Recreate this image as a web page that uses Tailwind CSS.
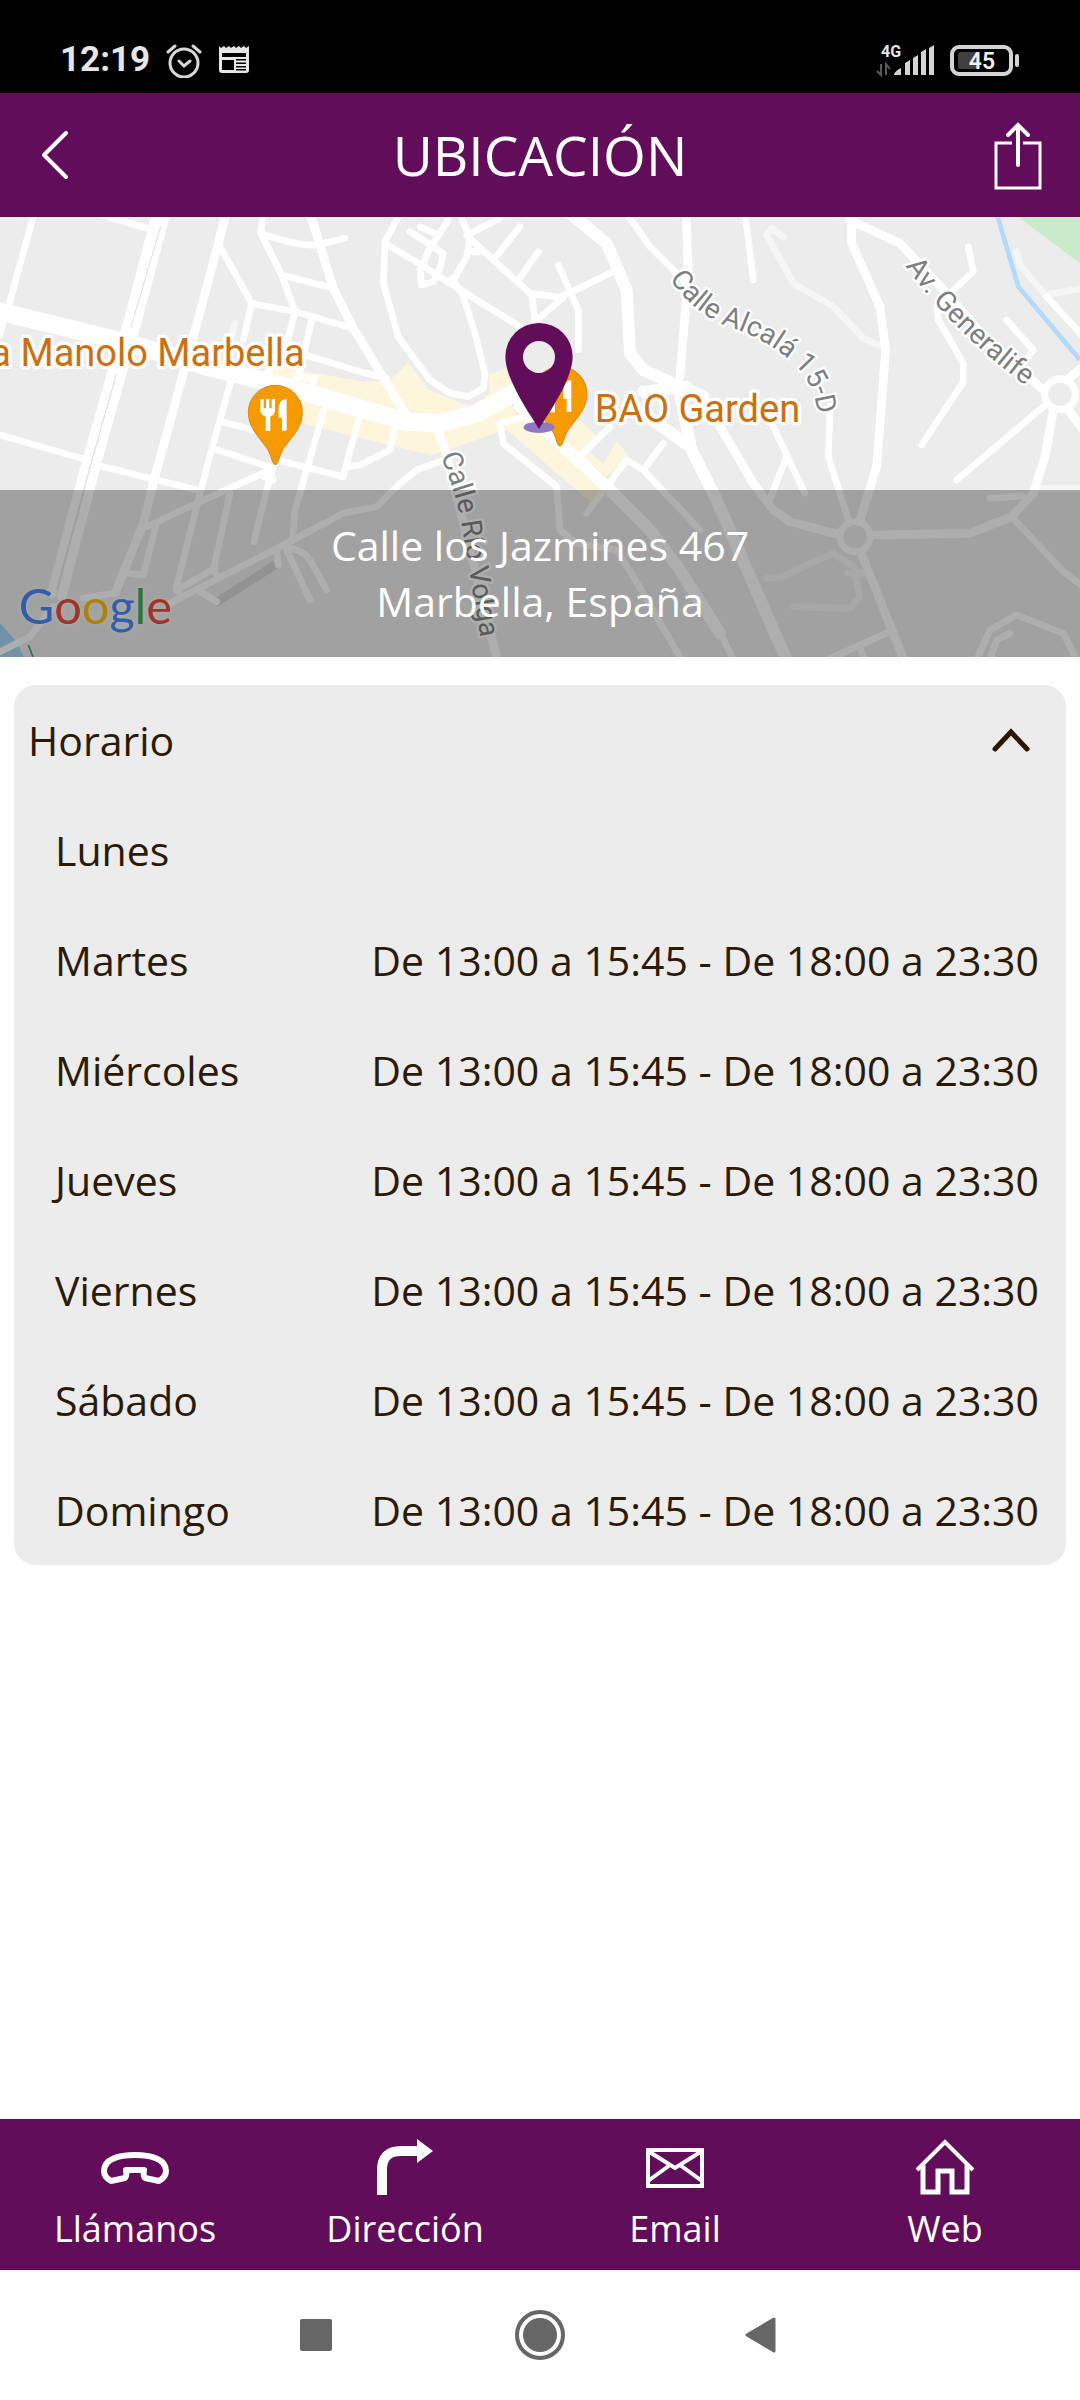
<!DOCTYPE html>
<html lang="es">
<head>
<meta charset="utf-8">
<meta name="viewport" content="width=device-width, initial-scale=1">
<title>Ubicación</title>
<script src="https://cdn.jsdelivr.net/npm/@tailwindcss/browser@4"></script>
</head>
<body class="flex min-h-screen flex-col bg-white font-['Open_Sans',sans-serif] text-[41px] leading-[56px] text-[#2b1a06]">

<!-- System status bar -->
<div class="flex h-[93px] items-center justify-between bg-black pt-[26px] pr-[60px] pl-[60px] font-['Roboto',sans-serif] text-[#e6e6e6]">
  <div class="flex items-center">
    <span class="text-[35px] leading-10 font-bold">12:19</span>
    <svg class="ml-4 h-9 w-9" viewBox="0 0 36 36" fill="none" stroke="#d8d8d8" stroke-width="3" stroke-linecap="round" aria-hidden="true"><circle cx="18" cy="21" r="14"/><path d="M2 10l7-6M34 10l-7-6M13 19l5 5 6-5"/></svg>
    <svg class="ml-4 h-8 w-8" viewBox="0 0 32 32" aria-hidden="true"><path fill="#e6e6e6" d="M1 2l2 2 3-2 2 2 3-2 2 2 3-2 2 2 3-2 2 2 3-2 2 2 3-2v24a3 3 0 0 1-3 3H4a3 3 0 0 1-3-3z"/><path fill="#000" d="M4 9h24v4H4zM4 16h12v10H4zM18 15h10v1.500H18zM18 18.500h10V20H18zM18 22h10v1.500H18zM18 25h10v1.500H18z"/></svg>
  </div>
  <div class="flex items-center gap-4">
    <svg class="h-8 w-[58px] overflow-visible" viewBox="0 0 58 32" aria-hidden="true"><text x="5" y="13" font-size="16" font-weight="700" fill="#e6e6e6">4G</text><path d="M5 20v11l-4-4M10 31V20l4 5" fill="none" stroke="#5a5a5a" stroke-width="2"/><path fill="#d4d4d4" d="M18 31c0-3 5-6 7-7v7zM29 19l5-3v15h-5zM37 14l5-3v20h-5zM45 8l5-3v26h-5zM53 4l5-3v30h-5z"/></svg>
    <svg class="h-8 w-[70px]" viewBox="0 0 70 32" aria-hidden="true"><rect x="2" y="3" width="59" height="27" rx="7" fill="none" stroke="#d4d4d4" stroke-width="4"/><rect x="8" y="8" width="19" height="17" rx="2" fill="#404040"/><path d="M67 12v9" stroke="#d4d4d4" stroke-width="4" stroke-linecap="round"/><text x="32" y="25" text-anchor="middle" font-size="23" font-weight="600" fill="#f0f0f0">45</text></svg>
  </div>
</div>

<header class="flex h-[124px] items-center justify-between bg-[#620d59] px-[38px] text-white">
  <button type="button" aria-label="Atrás" class="h-16 w-12"><svg class="h-16 w-12" viewBox="0 0 48 64" fill="none" stroke="currentColor" stroke-width="4" stroke-linecap="round" stroke-linejoin="round"><path d="M28 10L6 32l22 22"/></svg></button>
  <h1 class="text-[55px] leading-[76px]">UBICACIÓN</h1>
  <button type="button" aria-label="Compartir" class="h-[72px] w-12"><svg class="h-[72px] w-12" viewBox="0 0 48 72" fill="none" stroke="currentColor" stroke-width="3"><path d="M18 24H2v45h44V24H29"/><path stroke-width="4" stroke-linecap="round" d="M24 46V6M14 16L24 6l10 10"/></svg></button>
</header>

<main class="flex-1">
  <!-- Map with the address over its lower edge -->
  <section class="relative h-[440px] overflow-hidden bg-[#ececec]" aria-label="Mapa">
    <svg class="h-full w-full" viewBox="0 21 3240 1320" preserveAspectRatio="xMidYMid slice" font-family="Roboto, sans-serif">
      <g fill="#fdf5dc">
        <path d="M800 490L812 465 1090 515 1170 510 1225 458 1285 540 1410 590 1470 550 1465 495 1515 475 1540 530 1430 610 1320 645 1080 585z"/>
        <path d="M905 565L1080 610 1310 660 1530 580 1570 640 1330 725 1290 735 905 640z"/>
        <path d="M1510 650L1580 620 1820 830 1770 875zM1730 620L1790 680 1760 720 1810 760 1850 695 1885 735 1820 800 1700 700z"/>
      </g>
      <path fill="#c9eacb" d="M3055 21L3240 160V21z"/>
      <path fill="#9fd5f7" d="M0 1240l50 55 22 46H0z"/>
      <path d="M85 1305l14 36" stroke="#37a163" stroke-width="5"/>
      <path d="M2990 10L3055 230 3240 450" fill="none" stroke="#b3dafb" stroke-width="14"/>
      <path d="M645 1180L825 1065" stroke="#d2d4d6" stroke-width="26"/>
      <g fill="none" stroke="#f5f6f8" stroke-width="20" stroke-linecap="round" stroke-linejoin="round">
        <path d="M2350 80L2315 55 2300 75 2380 220 2500 290 2590 385 2650 412M3050 125L3060 165 3140 260M3150 252L3250 235M3120 835L3250 835M2300 1105L2345 1100 2500 1030 2560 1070 2580 1160 2550 1195 2440 1192 2380 1190M2545 1090h45"/>
        <path d="M690 400L705 340"/>
      </g>
      <g fill="none" stroke="#fff" stroke-linecap="round" stroke-linejoin="round">
        <g stroke-width="20">
          <path d="M105 0L28 280M12 330L0 375M290 10L465 62M790 0L782 70 845 195 885 305 860 400 800 490M782 70Q900 110 950 105L1035 85M845 195L1000 235M655 100L755 280 730 390M755 280L885 305 1060 355M935 330L900 480 880 520M900 500L945 505 935 540M915 435L1080 485 1160 505"/>
          <path d="M695 505L640 700 600 850 530 1130M665 635L760 660M640 715L820 775 590 880 430 955M-10 672L255 748M290 765L600 842M820 770L800 840 762 995M790 800L820 810M830 750L1030 800 1080 610M975 590L920 780 885 900 878 985M690 850L640 1080 655 1100M468 945L430 1095 385 1090"/>
          <path d="M510 1180L850 1005 1030 910 1130 890 1200 820 1250 780 1320 755M530 1140L645 1075M530 1130L545 1160M600 1145L650 1175M830 1020L835 1065M855 1010L930 1170M870 1015Q910 1020 930 1050L980 1140M0 1325L90 1280 160 1190M250 1165L345 1148"/>
          <path d="M1040 770L1080 765 1170 720 1185 655M1200 10L1155 95 1150 220 1195 380 1290 510 1350 550 1405 560 1450 535 1455 490 1425 370 1390 260 1360 210 1400 140 1410 85 1375 0"/>
          <path d="M1155 100L1265 165 1390 245 1560 350M1345 30L1290 115 1260 180 1265 225 1300 215 1320 175 1330 130 1230 65M1260 50L1315 75M1410 85L1480 150 1590 250 1680 262 1850 180M1400 75L1500 25M1410 125L1450 125M1560 50L1480 150M1615 125L1555 210M1675 165L1735 300 1735 420M1595 250L1605 335 1690 262M1345 215L1370 195"/>
          <path d="M1560 625L1500 640 1510 700 1670 830 1680 960 1730 1000 1850 1020 1900 1100 2045 1350M1740 740L1830 650M1760 910L1880 750 1930 780 2100 960M1930 780L1990 700M1880 10L1950 110 2060 220M2235 10L2260 210"/>
          <path d="M2905 110L2920 185 2860 240 2810 290 2815 330 2890 460 2890 515 2765 705M3020 330L3100 420 3060 470M3140 260L3250 380M2970 865L3065 858M2490 590L2485 740 2545 930M2320 650L2415 850M2360 740L2305 880M3035 920L3190 1085 3250 1130M2670 1265L2480 1350M2580 1310L2590 1345M2930 1350L2970 1260 3050 1215 3190 1270 3230 1350M2970 1350L2990 1290 3030 1270M2155 1255L2200 1350"/>
        </g>
        <g stroke-width="26">
          <path d="M680 0L655 100 580 380 550 490 462 810 430 940 345 1150M930 10L1000 235 1060 355 1130 470 1240 650M1310 650L1335 720 1395 960 1490 1341M2058 10L2065 190 2040 500M2160 650L2260 820 2320 900 2370 935 2520 975M2555 10V100L2640 290 2657 420 2630 770 2580 930M2550 30L2700 100 2840 250 2960 390 3130 540"/>
          <path d="M3130 590L2870 810" stroke-width="20"/>
          <path d="M3160 600L3135 740 3100 850 3035 920 2910 970 2610 975M3205 600L3250 660M3200 510L3250 470M2580 1020L2712 1350"/>
          <path d="M473 0L380 350 335 490 250 790 155 1150M500 0L407 350 368 480 290 760 185 1160" stroke-width="28"/>
        </g>
        <g stroke-width="36">
          <path d="M1710 10L1820 100 1880 240 1890 430 1930 480 2040 530 2110 560M1930 545L2060 530M1930 610L2070 710 2150 870 2360 1350M2040 550L2070 700M1560 590L1680 700 1820 830 1950 960 2040 1080 2160 1270" />
        </g>
        <path stroke-width="54" d="M-20 300L370 395 620 470 860 530 1080 595 1220 635 1320 640 1430 610 1550 545"/>
        <circle cx="3180" cy="553" r="46" fill="#ececec" stroke-width="22"/>
        <circle cx="2565" cy="980" r="45" fill="#ececec" stroke-width="20"/>
      </g>
      <path d="M482 50L393 350M350 490L270 770 170 1140" fill="none" stroke="#dcdee0" stroke-width="3"/>

      <path id="river-street" fill="none" d="M1322 737Q1372 860 1386 950T1443 1290"/>
      <path id="alcala-street" fill="none" d="M2008 206Q2080 310 2182 348 2320 395 2400 480 2450 540 2456 640"/>
      <path id="generalife-street" fill="none" d="M2716 168Q2860 370 3095 540"/>
      <g font-size="84" fill="#7b7e80" stroke="#fff" stroke-width="14" stroke-linejoin="round" paint-order="stroke">
        <text><textPath href="#river-street">Calle Río Volga</textPath></text>
        <text><textPath href="#alcala-street">Calle Alcalá 15-D</textPath></text>
        <text><textPath href="#generalife-street">Av. Generalife</textPath></text>
      </g>
      <g font-size="114" fill="#cc6f0e" stroke="#fff" stroke-width="20" stroke-linejoin="round" paint-order="stroke">
        <text x="914" y="467" text-anchor="end">a Manolo Marbella</text>
        <text x="1784" y="636">BAO Garden</text>
      </g>

      <g id="restaurant" transform="translate(826 607)">
        <path fill="#f59b00" stroke="#d98712" stroke-width="3" d="M0 157C-8 157-10 140-16 125-30 88-81 58-81 0A81 81 0 0 1 81 0C81 58 30 88 16 125 10 140 8 157 0 157z"/>
        <path fill="#fff" d="M-45-40h10v28h7v-28h10v28h7v-28h10v34q0 14-14 19v43h-14V13q-16-5-16-19zM34-41v96H20V16H10v-26q0-28 24-31z"/>
      </g>
      <use href="#restaurant" x="854" y="-56"/>

      <ellipse cx="1617" cy="652" rx="46" ry="17" fill="#8e78c4"/>
      <path fill="#620d59" fill-rule="evenodd" d="M1617 657C1595 620 1516 510 1516 440A101 101 0 0 1 1718 440C1718 510 1639 620 1617 657zM1617 393a48 48 0 1 0 0 96a48 48 0 1 0 0-96z"/>

      <text x="56" y="1243" class="drop-shadow-[0_0_8px_rgb(255_255_255/0.9)]" font-family="Lato, sans-serif" font-size="146"><tspan fill="#4285f4">G</tspan><tspan fill="#ea4335">o</tspan><tspan fill="#fbbc05">o</tspan><tspan fill="#4285f4">g</tspan><tspan fill="#34a853">l</tspan><tspan fill="#ea4335">e</tspan></text>
    </svg>
    <address class="absolute inset-x-0 bottom-0 bg-[#181818]/35 pt-[27px] pb-7 text-center text-white not-italic">Calle los Jazmines 467<br>Marbella, España</address>
  </section>

  <!-- Opening hours -->
  <section class="mx-[14px] mt-7 rounded-[22px] bg-[#ececec]">
    <h2><button type="button" aria-expanded="true" aria-controls="hours" class="flex h-[110px] w-full items-center justify-between pr-8 pl-[14px]">Horario
      <svg class="h-12 w-12" viewBox="0 0 48 48" fill="none" stroke="#2b1700" stroke-width="5" stroke-linecap="round" aria-hidden="true"><path d="M9 33L25 16l16 17"/></svg></button></h2>
    <table id="hours" class="w-full">
      <tbody>
        <tr class="h-[110px]"><th scope="row" class="pl-[41px] text-left font-normal">Lunes</th><td class="pr-[27px] text-right"></td></tr>
        <tr class="h-[110px]"><th scope="row" class="pl-[41px] text-left font-normal">Martes</th><td class="pr-[27px] text-right">De 13:00 a 15:45 - De 18:00 a 23:30</td></tr>
        <tr class="h-[110px]"><th scope="row" class="pl-[41px] text-left font-normal">Miércoles</th><td class="pr-[27px] text-right">De 13:00 a 15:45 - De 18:00 a 23:30</td></tr>
        <tr class="h-[110px]"><th scope="row" class="pl-[41px] text-left font-normal">Jueves</th><td class="pr-[27px] text-right">De 13:00 a 15:45 - De 18:00 a 23:30</td></tr>
        <tr class="h-[110px]"><th scope="row" class="pl-[41px] text-left font-normal">Viernes</th><td class="pr-[27px] text-right">De 13:00 a 15:45 - De 18:00 a 23:30</td></tr>
        <tr class="h-[110px]"><th scope="row" class="pl-[41px] text-left font-normal">Sábado</th><td class="pr-[27px] text-right">De 13:00 a 15:45 - De 18:00 a 23:30</td></tr>
        <tr class="h-[110px]"><th scope="row" class="pl-[41px] text-left font-normal">Domingo</th><td class="pr-[27px] text-right">De 13:00 a 15:45 - De 18:00 a 23:30</td></tr>
      </tbody>
    </table>
  </section>
</main>

<nav class="grid grid-cols-4 bg-[#620d59] pt-5 pb-[17px] text-[36px] leading-[48px] text-white">
  <a href="#llamar" class="flex flex-col items-center gap-[10px]"><svg class="h-14 w-[72px]" viewBox="0 0 72 56" fill="none" stroke="currentColor" stroke-width="6" stroke-linejoin="round" aria-hidden="true"><path d="M12 42Q5 38 5 32C5 20 20 16 36 16s31 4 31 16q0 6-7 10l-14-3q-2-2-1-8H27q1 6-1 8z"/></svg>Llámanos</a>
  <a href="#direccion" class="flex flex-col items-center gap-[10px]"><svg class="h-14 w-14" viewBox="0 0 56 56" aria-hidden="true"><path d="M5 56V31Q5 12 24 12H42" fill="none" stroke="currentColor" stroke-width="10"/><path fill="currentColor" d="M40 0l16 12-16 12z"/></svg>Dirección</a>
  <a href="#email" class="flex flex-col items-center gap-[10px]"><svg class="h-14 w-[58px]" viewBox="0 0 58 56" fill="none" stroke="currentColor" stroke-width="4" aria-hidden="true"><path d="M2 11h54v36H2zM2 12l27 17 27-17M2 42l22-16M56 42L34 26"/></svg>Email</a>
  <a href="#web" class="flex flex-col items-center gap-[10px]"><svg class="h-14 w-[60px]" viewBox="0 0 60 56" fill="none" stroke="currentColor" stroke-width="5" aria-hidden="true"><path stroke-width="4" d="M2 31L30 3l28 28"/><path d="M8 26v27h15V32h14v21h15V26"/></svg>Web</a>
</nav>

<!-- System navigation keys -->
<div class="flex h-[130px] items-center justify-center gap-[158px] bg-white text-[#666]">
  <button type="button" aria-label="Recientes" class="h-16 w-16"><svg class="h-16 w-16" viewBox="0 0 64 64"><rect x="14" y="16" width="32" height="32" rx="2" fill="currentColor"/></svg></button>
  <button type="button" aria-label="Inicio" class="h-16 w-16"><svg class="h-16 w-16" viewBox="0 0 64 64"><circle cx="32" cy="32" r="23" fill="none" stroke="currentColor" stroke-width="4"/><circle cx="32" cy="32" r="17" fill="currentColor"/></svg></button>
  <button type="button" aria-label="Volver" class="h-16 w-16"><svg class="h-16 w-16" viewBox="0 0 64 64"><path d="M17 32l27-16v32z" fill="currentColor" stroke="currentColor" stroke-width="3" stroke-linejoin="round"/></svg></button>
</div>
</body>
</html>
